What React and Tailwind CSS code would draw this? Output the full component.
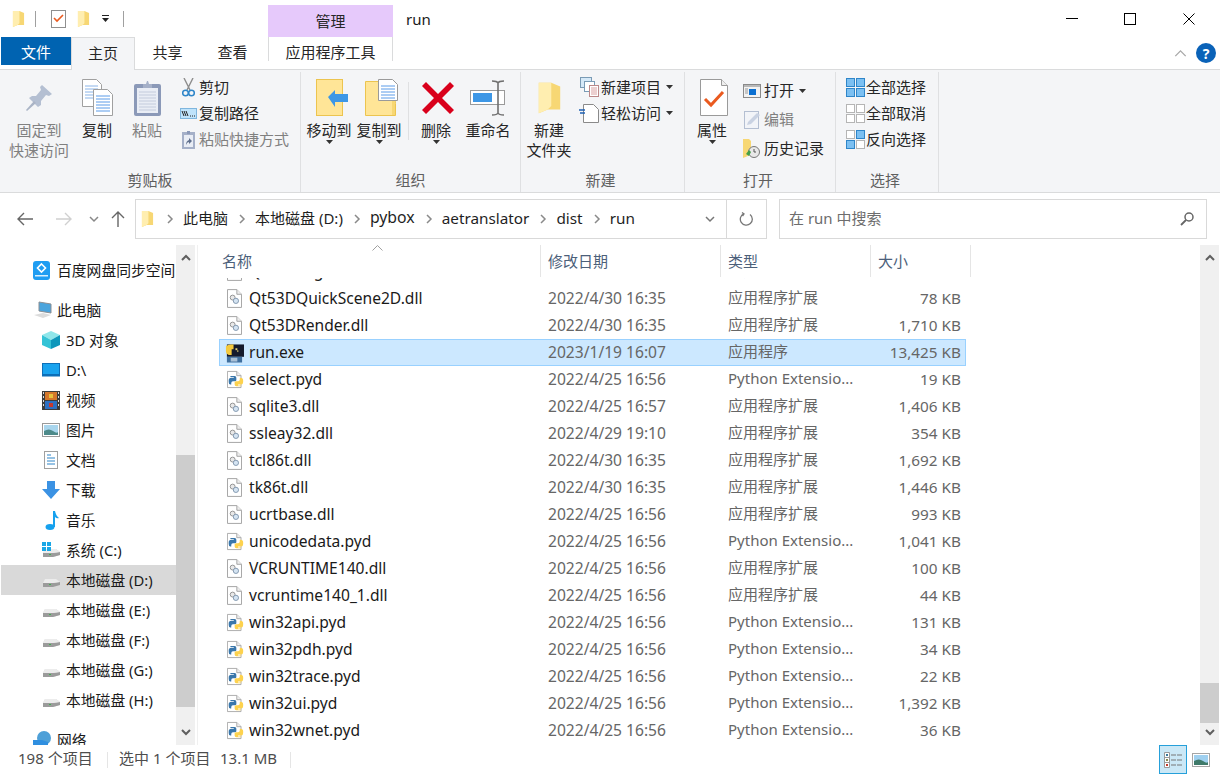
import React from 'react'

const FONT = { fontFamily: '"Noto Sans", "Noto Sans CJK SC", sans-serif' }

const files = [
  ['Qt53DLogic.dll', '2022/4/30 16:35', 'dll', ''],
  ['Qt53DQuickScene2D.dll', '2022/4/30 16:35', 'dll', '78 KB'],
  ['Qt53DRender.dll', '2022/4/30 16:35', 'dll', '1,710 KB'],
  ['run.exe', '2023/1/19 16:07', 'exe', '13,425 KB'],
  ['select.pyd', '2022/4/25 16:56', 'py', '19 KB'],
  ['sqlite3.dll', '2022/4/25 16:57', 'dll', '1,406 KB'],
  ['ssleay32.dll', '2022/4/29 19:10', 'dll', '354 KB'],
  ['tcl86t.dll', '2022/4/30 16:35', 'dll', '1,692 KB'],
  ['tk86t.dll', '2022/4/30 16:35', 'dll', '1,446 KB'],
  ['ucrtbase.dll', '2022/4/25 16:56', 'dll', '993 KB'],
  ['unicodedata.pyd', '2022/4/25 16:56', 'py', '1,041 KB'],
  ['VCRUNTIME140.dll', '2022/4/25 16:56', 'dll', '100 KB'],
  ['vcruntime140_1.dll', '2022/4/25 16:56', 'dll', '44 KB'],
  ['win32api.pyd', '2022/4/25 16:56', 'py', '131 KB'],
  ['win32pdh.pyd', '2022/4/25 16:56', 'py', '34 KB'],
  ['win32trace.pyd', '2022/4/25 16:56', 'py', '22 KB'],
  ['win32ui.pyd', '2022/4/25 16:56', 'py', '1,392 KB'],
  ['win32wnet.pyd', '2022/4/25 16:56', 'py', '36 KB'],
]

const typeNames = { dll: '应用程序扩展', exe: '应用程序', py: 'Python Extensio...' }

/* ---------- small drawings ---------- */

function Folder({ w = 14, h = 19 }) {
  return (
    <svg width={w} height={h} viewBox="0 0 14 19">
      <path d="M1 1h7l5 2v13l-7 0-5 2z" fill="#f7d774" />
      <path d="M1 1h7v13l-2 2-5 2z" fill="#ffeeb0" />
    </svg>
  )
}

function Chevron({ dir = 'right', size = 10, color = '#808080', width = 1.5 }) {
  const pts = {
    right: '3,1 7,5 3,9',
    down: '1,3 5,7 9,3',
    up: '1,7 5,3 9,7',
  }[dir]
  return (
    <svg width={size} height={size} viewBox="0 0 10 10">
      <polyline points={pts} fill="none" stroke={color} strokeWidth={width} />
    </svg>
  )
}

function Caret({ className = '' }) {
  return (
    <svg width="7" height="4" viewBox="0 0 7 4" className={className}>
      <path d="M0 0h7L3.5 4z" fill="#333" />
    </svg>
  )
}

function DllIcon() {
  return (
    <svg width="15" height="19" viewBox="0 0 16 20">
      <path d="M.5.5h10l5 5v14H.5z" fill="#fff" stroke="#a0a0a0" />
      <path d="M10.5.5v5h5" fill="#eee" stroke="#a0a0a0" />
      <circle cx="6" cy="9" r="2.6" fill="#e8e8e8" stroke="#8f8f8f" />
      <circle cx="9.5" cy="12.5" r="2.8" fill="#d5e4f2" stroke="#7f95ad" />
    </svg>
  )
}

function PyIcon() {
  return (
    <svg width="17" height="19" viewBox="0 0 20 20">
      <path d="M.5.5h11l5 5v14H.5z" fill="#fff" stroke="#a0a0a0" />
      <path d="M11.5.5v5h5" fill="#eee" stroke="#a0a0a0" />
      <path d="M4 6h5q2 0 2 2v3q0 1-2 1H7q-2 0-2 2v2H4q-2 0-2-3v-2q0-3 3-3h3V7H4z" fill="#3a77ab" />
      <path d="M16 18h-5q-2 0-2-2v-3q0-1 2-1h2q2 0 2-2V8h1q3 0 3 3v2q0 3-3 3h-3v1h4z" fill="#fdd24e" />
    </svg>
  )
}

function ExeIcon() {
  return (
    <svg width="19" height="20" viewBox="0 0 20 20">
      <rect x="2" y="1" width="18" height="13" fill="#141a2c" />
      <rect x="2" y="14" width="16" height="6" fill="#3f6f9e" />
      <rect x="6" y="15" width="7" height="4" fill="#a9c0d6" />
      <path d="M1 3q2-2 5-2h3v5H7v6H4q-3-1-3-4z" fill="#f4c93e" />
      <rect x="11" y="5" width="2" height="2" fill="#e8d37a" />
      <rect x="13" y="7" width="1" height="2" fill="#e8d37a" />
    </svg>
  )
}

function Drive({ win }) {
  return (
    <svg width="19" height="16" viewBox="0 0 19 16">
      <path d="M3 7h11l4 3v3l-7 2H1v-4z" fill="#d9d9d9" />
      <path d="M1 11h10l7-1v3l-7 2H1z" fill="#9b9b9b" />
      <path d="M1 11l2-4h11l4 3-7 1z" fill="#ececec" />
      <rect x="7" y="12" width="2" height="1" fill="#3fb34f" />
      {win && (
        <g fill="#19a7e6">
          <rect x="0" y="0" width="4" height="4" />
          <rect x="5" y="0" width="4" height="4" />
          <rect x="0" y="5" width="4" height="4" />
          <rect x="5" y="5" width="4" height="4" />
        </g>
      )}
    </svg>
  )
}

const sideIcons = {
  baidu: (
    <svg width="17" height="19" viewBox="0 0 17 19">
      <rect x="0" y="0" width="17" height="19" rx="3" fill="#1f9df2" />
      <path d="M8.500 3l4 4-4 4-4-4z" fill="none" stroke="#fff" strokeWidth="1.6" />
      <rect x="2" y="14" width="13" height="1.5" fill="#d7efff" />
    </svg>
  ),
  pc: (
    <svg width="20" height="18" viewBox="0 0 20 18">
      <path d="M6 1l12 2v9L6 10z" fill="#4aa4dd" stroke="#8b8f94" />
      <path d="M1 14l9-2 8 2-8 3z" fill="#dcdcdc" />
    </svg>
  ),
  cube: (
    <svg width="18" height="18" viewBox="0 0 18 18">
      <path d="M9 0l9 4-9 5-9-5z" fill="#8fe6ea" />
      <path d="M0 4l9 5v9l-9-4z" fill="#34c3d6" />
      <path d="M18 4L9 9v9l9-4z" fill="#0d97bb" />
    </svg>
  ),
  desktop: (
    <svg width="18" height="14" viewBox="0 0 18 14">
      <rect x=".5" y=".5" width="17" height="11" fill="#1aa3ee" stroke="#0d6fb8" />
      <rect x="0" y="11.5" width="18" height="2" fill="#0d6fb8" />
    </svg>
  ),
  video: (
    <svg width="18" height="19" viewBox="0 0 18 19">
      <rect x="0" y="0" width="18" height="19" fill="#3c3c3c" />
      <path d="M1 1h1v2H1zM1 5h1v2H1zM1 9h1v2H1zM1 13h1v2H1zM16 1h1v2h-1zM16 5h1v2h-1zM16 9h1v2h-1zM16 13h1v2h-1z" fill="#ddd" />
      <rect x="3" y="1" width="12" height="8" fill="#d4772c" />
      <rect x="3" y="10" width="12" height="8" fill="#2c6fc2" />
      <rect x="7" y="3" width="4" height="4" fill="#e8c23d" />
      <rect x="7" y="12" width="4" height="4" fill="#c6392f" />
    </svg>
  ),
  pic: (
    <svg width="18" height="14" viewBox="0 0 18 14">
      <rect x=".5" y=".5" width="17" height="13" fill="#fff" stroke="#9a9a9a" />
      <rect x="2" y="2" width="14" height="10" fill="#a9d6ee" />
      <path d="M2 8q5-3 9 0t5 1v3H2z" fill="#4d8a8a" />
    </svg>
  ),
  doc: (
    <svg width="14" height="18" viewBox="0 0 14 18" className="ml-[2px]">
      <rect x=".5" y=".5" width="13" height="17" fill="#fff" stroke="#a0a0a0" />
      <path d="M3 4h4M3 7h8M3 10h8M3 13h8" stroke="#2f86c9" strokeWidth="1.2" />
    </svg>
  ),
  down: (
    <svg width="18" height="18" viewBox="0 0 18 18">
      <path d="M5 0h8v8h5l-9 10L0 8h5z" fill="#3b92e3" />
    </svg>
  ),
  music: (
    <svg width="14" height="19" viewBox="0 0 14 19" className="ml-[3px]">
      <ellipse cx="5" cy="16" rx="4.5" ry="3" fill="#16a1ee" />
      <path d="M8 0h2q1 5 4 7-2 1-4-1v10H8z" fill="#16a1ee" />
    </svg>
  ),
  net: (
    <svg width="18" height="18" viewBox="0 0 18 18">
      <circle cx="11" cy="7" r="7" fill="#4ea0d8" />
      <path d="M0 9h9l6 2v7H0z" fill="#2f8fe0" />
    </svg>
  ),
}

const sidebar = [
  { label: '百度网盘同步空间', icon: 'baidu', indent: 33, w: 24, after: 10 },
  { label: '此电脑', icon: 'pc', indent: 33, w: 24 },
  { label: '3D 对象', icon: 'cube' },
  { label: 'D:\\', icon: 'desktop' },
  { label: '视频', icon: 'video' },
  { label: '图片', icon: 'pic' },
  { label: '文档', icon: 'doc' },
  { label: '下载', icon: 'down' },
  { label: '音乐', icon: 'music' },
  { label: '系统 (C:)', drive: 'win' },
  { label: '本地磁盘 (D:)', drive: 'plain', selected: true },
  { label: '本地磁盘 (E:)', drive: 'plain' },
  { label: '本地磁盘 (F:)', drive: 'plain' },
  { label: '本地磁盘 (G:)', drive: 'plain' },
  { label: '本地磁盘 (H:)', drive: 'plain', after: 10 },
  { label: '网络', icon: 'net', indent: 33, w: 24 },
]

/* ---------- ribbon pieces ---------- */

const PinIcon = (
  <svg width="28" height="28" viewBox="0 0 28 28">
    <path d="M17 1l10 9-3 2-3-1-5 6 0 4-3 2-9-9 3-2 4 0 5-6-1-3z" fill="#b4bfd2" />
    <path d="M9 17L1 26l1 1 9-8z" fill="#aab4c6" />
  </svg>
)

const CopyIcon = (
  <svg width="31" height="37" viewBox="0 0 31 37">
    <path d="M.5.5h14l5 5v22H.5z" fill="#fff" stroke="#a0a0a0" />
    <path d="M3 7h13M3 10h13M3 13h13M3 16h13M3 19h13" stroke="#8ab4e8" />
    <path d="M11.500 10.500h14l5 5v21h-19z" fill="#fff" stroke="#a0a0a0" />
    <path d="M14 17h14M14 20h14M14 23h14M14 26h14M14 29h14M14 32h14" stroke="#5b9be8" />
  </svg>
)

const PasteIcon = (
  <svg width="27" height="36" viewBox="0 0 27 36">
    <rect x="0" y="4" width="27" height="32" rx="2" fill="#8b99b8" />
    <rect x="3" y="8" width="21" height="25" fill="#e9edf5" />
    <path d="M5 12h17M5 15h17M5 18h17M5 21h17M5 24h17M5 27h17M5 30h17" stroke="#c3cbdc" />
    <path d="M9 4h3l1-3h1l1 3h3v4H9z" fill="#a5b0c8" />
  </svg>
)

const ScissorsIcon = (
  <svg width="13" height="19" viewBox="0 0 13 19">
    <path d="M2 0l6 12M11 0L5 12" stroke="#8d8d8d" strokeWidth="1.4" fill="none" />
    <circle cx="3.5" cy="15" r="2.8" fill="none" stroke="#2f86c9" strokeWidth="1.5" />
    <circle cx="9.5" cy="15" r="2.8" fill="none" stroke="#2f86c9" strokeWidth="1.5" />
  </svg>
)

const PathIcon = (
  <svg width="17" height="11" viewBox="0 0 17 11">
    <rect x=".5" y=".5" width="16" height="10" fill="#bfe3fb" stroke="#7fb6de" />
    <path d="M2 3l2 5M4 3l2 5M6 3l2 5" stroke="#222" />
    <path d="M10 8h1M12 8h1M14 8h1" stroke="#222" />
  </svg>
)

const ShortcutIcon = (
  <svg width="13" height="19" viewBox="0 0 13 19">
    <rect x="0" y="2" width="13" height="17" fill="#a5b0c8" />
    <rect x="2" y="5" width="9" height="12" fill="#e9edf5" />
    <path d="M5 1h3v3H5z" fill="#8b99b8" />
    <path d="M4 15q0-4 3-5V8l3 3-3 3v-2q-2 0-3 3z" fill="#5f6f8c" />
  </svg>
)

const MoveToIcon = (
  <svg width="33" height="37" viewBox="0 0 33 37">
    <rect x=".5" y=".5" width="26" height="36" fill="#ffe597" stroke="#ecc44f" />
    <path d="M12 18l7-7v4h13v8H19v5z" fill="#3d97e6" />
  </svg>
)

const CopyToIcon = (
  <svg width="34" height="37" viewBox="0 0 34 37">
    <path d="M.5 2.500h27l3 22v12H.5z" fill="#ffe597" stroke="#ecc44f" />
    <path d="M27 20q3-2 3 2v14h-3z" fill="#f7d774" />
    <path d="M13.500.5h14l5 5v16h-19z" fill="#fff" stroke="#9a9a9a" />
    <path d="M16 7h14M16 10h14M16 13h14M16 16h14M16 19h14" stroke="#5b9be8" />
  </svg>
)

const DeleteIcon = (
  <svg width="32" height="32" viewBox="0 0 32 32">
    <path d="M4 0l12 12L28 0l4 4-12 12 12 12-4 4-12-12L4 32l-4-4 12-12L0 4z" fill="#d9001b" />
  </svg>
)

const RenameIcon = (
  <svg width="36" height="36" viewBox="0 0 36 36">
    <rect x=".5" y="10.5" width="34" height="14" fill="#fff" stroke="#9a9a9a" />
    <rect x="3" y="13" width="19" height="9" fill="#3d97e6" />
    <path d="M22 1q5 0 6 2 1-2 6-2M28 3v30M22 35q5 0 6-2 1 2 6 2" fill="none" stroke="#707070" strokeWidth="1.6" />
  </svg>
)

const NewItemIcon = (
  <svg width="19" height="20" viewBox="0 0 19 20">
    <rect x=".5" y=".5" width="11" height="10" fill="#d5e9f8" stroke="#7a9bb5" />
    <rect x="4.500" y="4.500" width="10" height="10" fill="#fff" stroke="#7a9bb5" />
    <rect x="9.500" y="8.500" width="9" height="11" fill="#fff" stroke="#b88" />
    <path d="M11 11h6M11 13h6M11 15h6M11 17h6" stroke="#d9a0a0" />
  </svg>
)

const EasyIcon = (
  <svg width="20" height="19" viewBox="0 0 20 19">
    <path d="M4.500.5h10l5 5v13h-15z" fill="#fff" stroke="#8a8a8a" />
    <path d="M0 6h6M1 9h5" stroke="#1f62b5" strokeWidth="1.4" />
  </svg>
)

const PropsIcon = (
  <svg width="28" height="37" viewBox="0 0 28 37">
    <path d="M.5.5h21l6 6v30H.5z" fill="#fff" stroke="#9a9a9a" />
    <path d="M21.500.5v6h6" fill="#eee" stroke="#9a9a9a" />
    <path d="M5 20l6 6 12-13" fill="none" stroke="#ea5a1f" strokeWidth="3" />
  </svg>
)

const OpenIcon = (
  <svg width="18" height="14" viewBox="0 0 18 14">
    <rect x=".5" y=".5" width="17" height="13" fill="#f2f2f2" stroke="#8a8a8a" />
    <rect x="1" y="1" width="16" height="2" fill="#b8b8b8" />
    <rect x="6" y="5" width="7" height="6" fill="#0a6fd1" />
    <path d="M2 5h3M2 7h3M2 9h3" stroke="#999" />
  </svg>
)

const EditIcon = (
  <svg width="17" height="18" viewBox="0 0 17 18">
    <rect x=".5" y=".5" width="14" height="17" fill="#f2f4f8" stroke="#b4bfd2" />
    <path d="M3 14l1-3 9-9 3 2-9 9z" fill="#c9d2e2" />
  </svg>
)

const HistoryIcon = (
  <svg width="18" height="19" viewBox="0 0 18 19">
    <path d="M0 0h6l2 2v13l-3 2-5 2z" fill="#f7d774" />
    <circle cx="11" cy="13" r="5.5" fill="#e8e8e8" stroke="#777" />
    <path d="M11 10v3h2" stroke="#555" fill="none" />
    <path d="M3 15l3-4 2 2-2 4z" fill="#43a047" />
  </svg>
)

// 2x2 grid used by the three selection commands
function SelectGrid({ on = [0, 1, 2, 3] }) {
  const cells = [[0, 0], [10, 0], [0, 10], [10, 10]]
  return (
    <svg width="19" height="19" viewBox="0 0 19 19">
      {cells.map(([x, y], i) => (
        <rect
          key={i}
          x={x + 0.5}
          y={y + 0.5}
          width="8"
          height="8"
          fill={on.includes(i) ? '#7cc0f2' : '#fff'}
          stroke={on.includes(i) ? '#2f86c9' : '#b5b5b5'}
        />
      ))}
    </svg>
  )
}

function BigButton({ icon, lines, caret, muted, className = '', iconClass = '' }) {
  return (
    <div className={`flex flex-col items-center ${className}`}>
      <div className={`flex h-[45px] items-center justify-center ${iconClass}`}>{icon}</div>
      {lines.map((t) => (
        <div key={t} className={`h-[20px] whitespace-nowrap leading-[20px] ${muted ? 'text-[#808080]' : 'text-[#262626]'}`}>
          {t}
        </div>
      ))}
      {caret && <Caret />}
    </div>
  )
}

function SmallButton({ icon, label, caret, muted, iconW = 22, h = 26 }) {
  return (
    <div className="flex items-center" style={{ height: h }}>
      <div className="flex items-center justify-center" style={{ width: iconW }}>{icon}</div>
      <span className={`whitespace-nowrap ${muted ? 'text-[#808080]' : 'text-[#262626]'}`}>{label}</span>
      {caret && <Caret className="ml-[5px]" />}
    </div>
  )
}

function Group({ label, width, labelClass = '', children }) {
  return (
    <div className="flex h-full flex-col border-r border-[#dfe0e2]" style={{ width }}>
      <div className="flex h-[96px] flex-none pt-[3px]">{children}</div>
      <div className={`h-[26px] text-center leading-[24px] text-[#5f5f5f] ${labelClass}`}>{label}</div>
    </div>
  )
}

function Ribbon() {
  return (
    <div className="flex h-[124px] border-y border-[#dadbdc] bg-[#f4f5f7] pt-[2px]">
      <Group label="剪贴板" width={301}>
        <BigButton muted icon={PinIcon} lines={['固定到', '快速访问']} className="ml-[9px] w-[60px]" />
        <BigButton icon={CopyIcon} lines={['复制']} className="ml-[3px] w-[50px]" />
        <BigButton muted icon={PasteIcon} lines={['粘贴']} className="w-[50px]" />
        <div className="ml-[5px] -mt-[1px]">
          <SmallButton icon={ScissorsIcon} label="剪切" />
          <SmallButton icon={PathIcon} label="复制路径" />
          <SmallButton muted icon={ShortcutIcon} label="粘贴快捷方式" />
        </div>
      </Group>
      <Group label="组织" width={220}>
        <BigButton icon={MoveToIcon} lines={['移动到']} caret className="ml-[3px] w-[50px]" iconClass="ml-[6px]" />
        <BigButton icon={CopyToIcon} lines={['复制到']} caret className="w-[50px]" iconClass="ml-[6px]" />
        <div className="mx-[4px] mt-[7px] h-[58px] w-px bg-[#dfe0e2]" />
        <BigButton icon={DeleteIcon} lines={['删除']} caret className="w-[46px]" iconClass="ml-[3px]" />
        <BigButton icon={RenameIcon} lines={['重命名']} className="ml-[4px] w-[50px]" />
      </Group>
      <Group label="新建" width={164} labelClass="pr-[4px]">
        <BigButton icon={<Folder w={25} h={36} />} lines={['新建', '文件夹']} className="ml-[3px] w-[50px]" />
        <div className="ml-[3px] -mt-[1px]">
          <SmallButton icon={NewItemIcon} label="新建项目" caret iconW={24} />
          <SmallButton icon={EasyIcon} label="轻松访问" caret iconW={24} />
        </div>
      </Group>
      <Group label="打开" width={151} labelClass="pr-[4px]">
        <BigButton icon={PropsIcon} lines={['属性']} caret className="ml-[2px] w-[50px]" iconClass="ml-[4px]" />
        <div className="ml-[3px] pt-[1px]">
          <SmallButton icon={OpenIcon} label="打开" caret h={29} iconW={24} />
          <SmallButton muted icon={EditIcon} label="编辑" h={29} iconW={24} />
          <SmallButton icon={HistoryIcon} label="历史记录" h={29} iconW={24} />
        </div>
      </Group>
      <Group label="选择" width={103} labelClass="pr-[4px]">
        <div className="ml-[8px] -mt-[1px]">
          <SmallButton icon={<SelectGrid />} label="全部选择" />
          <SmallButton icon={<SelectGrid on={[]} />} label="全部取消" />
          <SmallButton icon={<SelectGrid on={[1, 2]} />} label="反向选择" />
        </div>
      </Group>
    </div>
  )
}

/* ---------- window rows ---------- */

function TitleBar() {
  return (
    <div className="flex h-[37px] items-end bg-white">
      <div className="flex h-[37px] w-[268px] items-center pl-[12px]">
        <Folder w={13} h={18} />
        <div className="ml-[10px] h-[16px] w-px bg-[#a0a0a0]" />
        <svg width="15" height="18" viewBox="0 0 15 18" className="ml-[15px]">
          <rect x=".5" y=".5" width="14" height="17" fill="#fff" stroke="#8f8f8f" />
          <path d="M3 8l3 3 6-6" fill="none" stroke="#ea5a1f" strokeWidth="1.6" />
        </svg>
        <div className="ml-[11px]"><Folder w={13} h={18} /></div>
        <svg width="8" height="8" viewBox="0 0 8 8" className="ml-[12px]">
          <path d="M0 0h7v1H0zM0 3h7L3.5 7z" fill="#222" />
        </svg>
        <div className="ml-[13px] h-[16px] w-px bg-[#a0a0a0]" />
      </div>
      <div className="flex h-[32px] w-[125px] items-center justify-center bg-[#e6c9fb] pt-px text-[#262626]">管理</div>
      <div className="ml-[13px] h-[37px] pt-[9px] leading-[20px] text-[#1a1a1a]">run</div>
      <div className="ml-auto flex h-[37px] items-center pr-[25px]">
        <div className="h-px w-[12px] bg-black" />
        <div className="ml-[46px] h-[12px] w-[12px] border border-black" />
        <svg width="12" height="12" viewBox="0 0 12 12" className="ml-[47px]">
          <path d="M.5.5l11 11M11.500.5l-11 11" stroke="#000" />
        </svg>
      </div>
    </div>
  )
}

function TabRow() {
  return (
    <div className="flex h-[32px] bg-white pl-px">
      <div className="h-[28px] w-[70px] bg-[#0063b1] pt-[1px] text-center leading-[28px] text-white">文件</div>
      <div className="z-10 h-[33px] w-[64px] border-x border-t border-[#dadbdc] bg-[#f4f5f7] text-center leading-[30px] text-[#262626]">主页</div>
      <div className="w-[65px] text-center leading-[31px] text-[#262626]">共享</div>
      <div className="w-[65px] text-center leading-[31px] text-[#262626]">查看</div>
      <div className="ml-[3px] h-[24px] w-[125px] border-x border-[#dadbdc] text-center leading-[31px] text-[#262626]">应用程序工具</div>
      <div className="ml-auto flex items-center pr-[4px]">
        <Chevron dir="up" size={13} color="#a8a8a8" width={1} />
        <div className="ml-[9px] flex h-[20px] w-[20px] items-center justify-center rounded-full bg-[#0a62b8] text-[14px] font-bold text-white">?</div>
      </div>
    </div>
  )
}

// the latin crumbs run a little wider than the cjk ones
const crumbs = [
  ['此电脑', 'text-[15px]'],
  ['本地磁盘 (D:)', 'text-[15px]'],
  ['pybox', 'text-[15.8px]'],
  ['aetranslator', 'text-[15.3px]'],
  ['dist', 'text-[15.3px]'],
  ['run', 'text-[15.3px]'],
]

function AddressBar() {
  return (
    <div className="flex h-[52px] items-center bg-white">
      <div className="flex w-[135px] items-center text-[#808080]">
        <svg width="16" height="14" viewBox="0 0 16 14" className="ml-[17px]">
          <path d="M7 1L1 7l6 6M1 7h15" fill="none" stroke="#666" strokeWidth="1.4" />
        </svg>
        <svg width="16" height="14" viewBox="0 0 16 14" className="ml-[23px]">
          <path d="M9 1l6 6-6 6M15 7H0" fill="none" stroke="#d0d0d0" strokeWidth="1.4" />
        </svg>
        <div className="ml-[17px]"><Chevron dir="down" color="#888" /></div>
        <svg width="14" height="16" viewBox="0 0 14 16" className="ml-[12px]">
          <path d="M1 7l6-6 6 6M7 1v15" fill="none" stroke="#666" strokeWidth="1.4" />
        </svg>
      </div>
      <div className="flex h-[40px] w-[632px] items-center border border-[#d9d9d9]">
        <div className="ml-[5px]"><Folder w={13} h={18} /></div>
        <div className="flex flex-1 items-center pl-[11px]">
          {crumbs.map(([c, size]) => (
            <React.Fragment key={c}>
              <Chevron color="#8a8a8a" size={10} />
              <span className={`-mt-[2px] ml-[8px] mr-[9px] whitespace-nowrap text-[#1f1f1f] ${size}`}>{c}</span>
            </React.Fragment>
          ))}
        </div>
        <div className="flex h-full w-[32px] items-center justify-center"><Chevron dir="down" color="#777" /></div>
        <div className="flex h-full w-[40px] items-center justify-center border-l border-[#d9d9d9]">
          <svg width="15" height="15" viewBox="0 0 15 15">
            <path d="M5 1.6A6 6 0 1 0 11 2.4M3 .5l2 1.5-1.5 2" fill="none" stroke="#777" strokeWidth="1.3" />
          </svg>
        </div>
      </div>
      <div className="ml-[12px] flex h-[40px] w-[428px] items-center justify-between border border-[#d9d9d9] px-[9px] text-[#6d6d6d]">
        <span className="-mt-[2px]">在 run 中搜索</span>
        <svg width="14" height="14" viewBox="0 0 14 14" className="mr-[3px]">
          <circle cx="9" cy="5" r="4" fill="none" stroke="#666" strokeWidth="1.5" />
          <path d="M6 8l-5 5" stroke="#666" strokeWidth="1.8" />
        </svg>
      </div>
    </div>
  )
}

function Scrollbar({ thumbTop, thumbH }) {
  return (
    <div className="relative flex h-full w-[19px] flex-none flex-col items-center justify-between bg-[#f0f0f0] py-[8px]">
      <Chevron dir="up" color="#5f5f5f" width={2} />
      <div className="absolute left-0 w-full bg-[#cdcdcd]" style={{ top: thumbTop, height: thumbH }} />
      <Chevron dir="down" color="#5f5f5f" width={2} />
    </div>
  )
}

function Sidebar() {
  return (
    <div className="h-full w-[175px] flex-none overflow-hidden pt-[10px] text-[14.8px]">
      {sidebar.map((item) => (
        <div
          key={item.label}
          className={`flex h-[30px] flex-none items-center ${item.selected ? 'bg-[#d9d9d9]' : ''}`}
          style={{ paddingLeft: (item.indent ?? 42) - 1, marginBottom: item.after ?? 0 }}
        >
          <div className="flex flex-none items-center justify-center" style={{ width: item.w ?? 24, height: 20 }}>
            <div className="mr-auto flex">
              {item.drive ? <Drive win={item.drive === 'win'} /> : sideIcons[item.icon]}
            </div>
          </div>
          <span className="whitespace-nowrap text-[#1a1a1a]">{item.label}</span>
        </div>
      ))}
    </div>
  )
}

function FileRow({ name, date, kind, size }) {
  const selected = name === 'run.exe'
  return (
    <div className={`flex h-[27px] w-[747px] items-center border ${selected ? 'border-[#99d1ff] bg-[#cce8ff]' : 'border-transparent'}`}>
      <div className={`flex w-[29px] flex-none justify-start ${kind === 'exe' ? 'pl-[5px]' : 'pl-[7px]'}`}>
        {kind === 'dll' && <DllIcon />}
        {kind === 'py' && <PyIcon />}
        {kind === 'exe' && <ExeIcon />}
      </div>
      <div className="w-[299px] flex-none whitespace-nowrap text-[15.6px] text-[#1a1a1a]">{name}</div>
      <div className="w-[180px] flex-none whitespace-nowrap text-[15.6px] text-[#666]">{date}</div>
      <div className="-mt-[2px] w-[150px] flex-none whitespace-nowrap text-[#666]">{typeNames[kind]}</div>
      <div className="w-[83px] flex-none whitespace-nowrap text-right text-[15.3px] text-[#666]">{size}</div>
    </div>
  )
}

const columns = [
  ['名称', 322],
  ['修改日期', 180],
  ['类型', 150],
  ['大小', 100],
]

function FileList() {
  return (
    <div className="flex h-full flex-1 flex-col overflow-hidden border-l border-[#f0f0f0] pl-[21px]">
      <div className="relative flex h-[33px] flex-none">
        <svg width="11" height="6" viewBox="0 0 11 6" className="absolute left-[153px] top-[0px]">
          <polyline points="0.5,5.5 5.5,0.5 10.500,5.5" fill="none" stroke="#a0a0a0" />
        </svg>
        {columns.map(([label, w]) => (
          <div key={label} className="h-[32px] flex-none border-r border-[#e5e5e5] pt-[5px] leading-[22px] text-[#4c607a]" style={{ width: w, paddingLeft: label === '名称' ? 3 : 7 }}>
            {label}
          </div>
        ))}
      </div>
      <div className="min-h-0 flex-1 overflow-hidden">
        <div className="-mt-[20px]">
          {files.map((f) => (
            <FileRow key={f[0]} name={f[0]} date={f[1]} kind={f[2]} size={f[3]} />
          ))}
        </div>
      </div>
    </div>
  )
}

function StatusBar() {
  return (
    <div className="flex h-[29px] flex-none items-center bg-white pl-[18px] text-[#4d4d4d]">
      <span className="-mt-[2px] w-[89px] whitespace-nowrap">198 个项目</span>
      <div className="h-[16px] w-px bg-[#e5e5e5]" />
      <span className="-mt-[2px] ml-[11px] w-[101px] whitespace-nowrap">选中 1 个项目</span>
      <span className="-mt-[2px] w-[70px] whitespace-nowrap">13.1 MB</span>
      <div className="h-[16px] w-px bg-[#e5e5e5]" />
      <div className="ml-auto flex items-center pr-[10px]">
        <div className="flex h-[29px] w-[28px] items-center justify-center border border-[#26a0da] bg-[#cbe8f6]">
          <svg width="18" height="16" viewBox="0 0 18 16">
            <path d="M.5.5h5v15h-5zM.5 5.500h5M.5 10.500h5" fill="#fff" stroke="#9a9a9a" />
            <rect x="2" y="2" width="2" height="2" fill="#3b7a9a" />
            <rect x="2" y="7" width="2" height="2" fill="#8a8a4a" />
            <rect x="2" y="12" width="2" height="2" fill="#c43a2a" />
            <path d="M7 3h5M13 3h5M7 8h5M13 8h5M7 13h5M13 13h5" stroke="#777" />
          </svg>
        </div>
        <svg width="18" height="14" viewBox="0 0 18 14" className="ml-[5px]">
          <rect x=".5" y=".5" width="17" height="13" fill="#fff" stroke="#a5a5a5" />
          <rect x="2" y="2" width="14" height="10" fill="#9fd0f0" />
          <path d="M2 8q5-3 9 0t5 1v3H2z" fill="#3f7a6a" />
        </svg>
      </div>
    </div>
  )
}

export default function App() {
  return (
    <div className="flex h-[774px] w-[1220px] flex-col overflow-hidden bg-white text-[15px]" style={FONT}>
      <TitleBar />
      <TabRow />
      <Ribbon />
      <AddressBar />
      <div className="flex h-[500px] flex-none pl-px">
        <Sidebar />
        <Scrollbar thumbTop={210} thumbH={252} />
        <div className="w-[2px]" />
        <FileList />
        <Scrollbar thumbTop={438} thumbH={40} />
        <div className="w-px" />
      </div>
      <StatusBar />
    </div>
  )
}
